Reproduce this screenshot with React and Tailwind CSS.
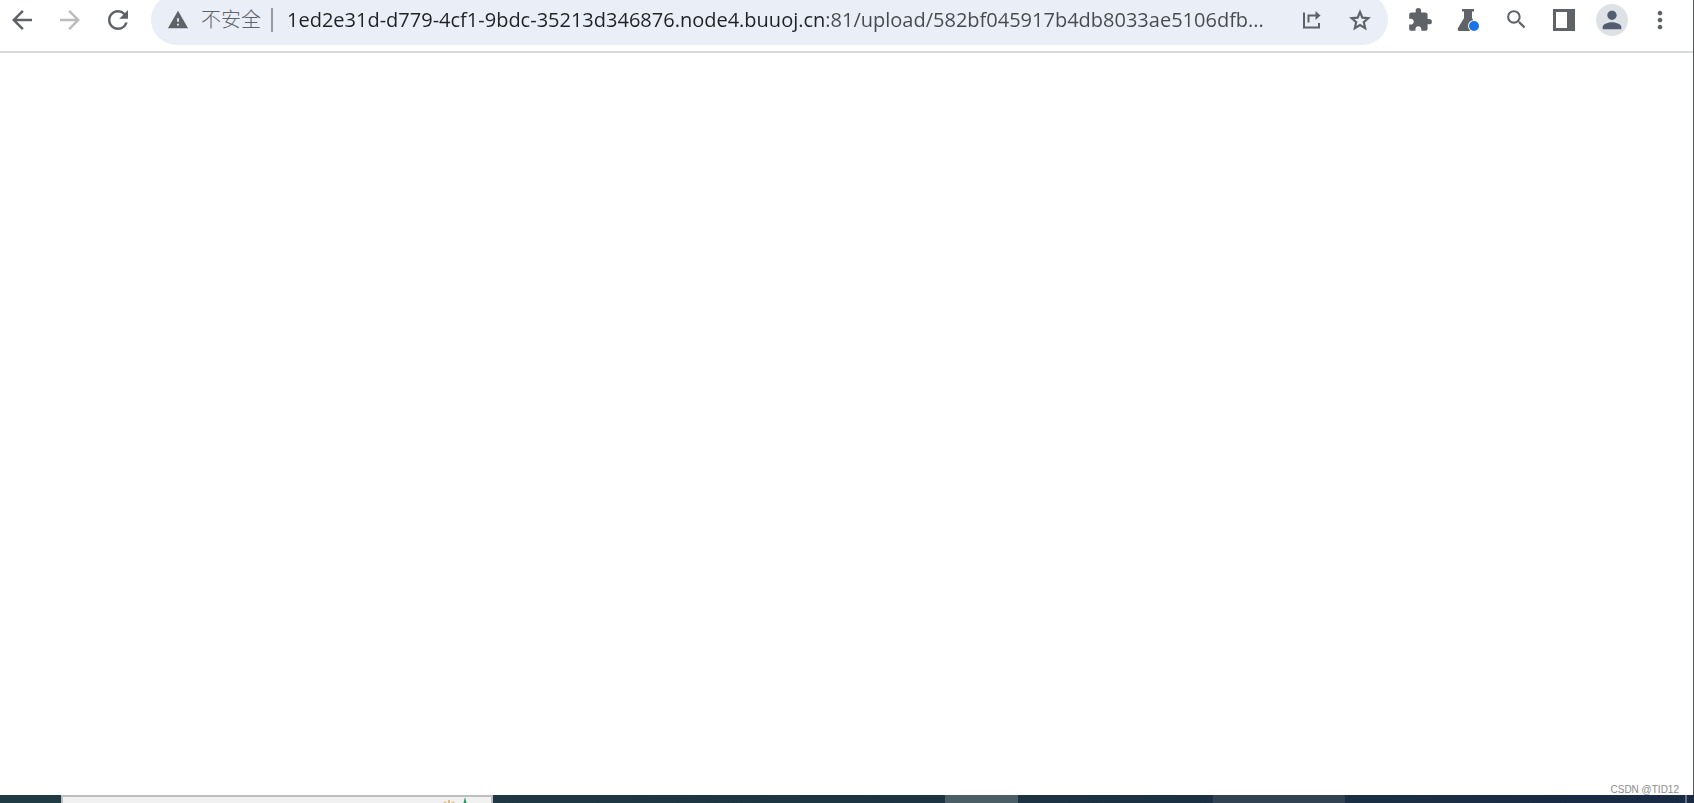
import { useState } from 'react';
import {
    MdArrowBack,
    MdArrowForward,
    MdExtension,
    MdMoreVert,
    MdPerson,
    MdRefresh,
    MdSearch,
    MdWarning,
} from 'react-icons/md';

function IconButton({ label, disabled, children }) {
    return (
        <button
            type="button"
            aria-label={label}
            disabled={disabled}
            className="flex h-8 w-8 shrink-0 items-center justify-center rounded-full text-[#5f6368] disabled:text-[#babcbe]"
        >
            {children}
        </button>
    );
}

function ShareIcon() {
    return (
        <svg width="20" height="20" viewBox="0 0 20 20" fill="none" stroke="currentColor" strokeWidth="2">
            <path d="M2 2.5V17.500h15v-4.500" />
            <path d="M6.500 12.500V5.500H15" />
            <path d="M13.500 1L18.500 5.500l-5 4.500z" fill="currentColor" stroke="none" />
        </svg>
    );
}

function StarIcon() {
    return (
        <svg width="26" height="26" viewBox="0 0 24 24" fill="none" stroke="currentColor" strokeWidth="2">
            <path d="M12 4.600l2.200 5.200 5.500.5-4.200 3.700 1.300 5.500L12 16.600l-4.800 2.900 1.300-5.500-4.200-3.700 5.500-.5z" />
        </svg>
    );
}

function FlaskIcon() {
    return (
        <svg width="24" height="24" viewBox="0 0 24 24">
            <path d="M6 1h12v2.500h-2v6.500l6 10c.8 1.500.3 3-1.500 3h-17c-1.800 0-2.300-1.500-1.500-3l6-10V3.500H6z" fill="#5f6368" />
            <circle cx="18" cy="18" r="6" fill="#fff" />
            <circle cx="18" cy="18" r="5" fill="#1a73e8" />
        </svg>
    );
}

function SidePanelIcon() {
    return (
        <svg width="22" height="22" viewBox="0 0 22 22">
            <path d="M0 0h22v22H0zM3 3v16h11V3z" fill="#5f6368" fillRule="evenodd" />
        </svg>
    );
}

function AddressBar() {
    const [url, setUrl] = useState('1ed2e31d-d779-4cf1-9bdc-35213d346876.node4.buuoj.cn:81/upload/582bf045917b4db8033ae5106dfb...');

    return (
        <div className="ml-px flex h-[51px] min-w-0 flex-1 items-center rounded-full bg-[#e9eef7] pl-4 pr-3">
            <button type="button" className="flex shrink-0 items-center gap-3 text-xl text-[#5f6368]">
                <MdWarning size={22} />
                <span className="font-light">不安全</span>
            </button>
            <div className="ml-2.5 mr-3.5 h-6 w-0.5 shrink-0 bg-[#9a9da3]" />
            {/* host is darker than the path */}
            <input
                type="text"
                aria-label="Address"
                value={url}
                onChange={(e) => setUrl(e.target.value)}
                className="h-8 min-w-0 flex-1 bg-[linear-gradient(to_right,#202124_540px,#47494d_540px)] bg-clip-text text-xl text-[#202124] outline-none [-webkit-text-fill-color:transparent]"
            />
            <div className="flex shrink-0 gap-4">
                <IconButton label="Share"><ShareIcon /></IconButton>
                <IconButton label="Bookmark"><StarIcon /></IconButton>
            </div>
        </div>
    );
}

function Toolbar() {
    return (
        <header className="border-b-2 border-[#dadada] pb-3">
            <div className="flex h-[39px] items-center gap-4 px-1.5">
                <IconButton label="Back"><MdArrowBack size={30} /></IconButton>
                <IconButton label="Forward" disabled><MdArrowForward size={30} /></IconButton>
                <IconButton label="Reload"><MdRefresh size={30} /></IconButton>
                <AddressBar />
                <div className="flex gap-4 pr-[11px]">
                    <IconButton label="Extensions"><MdExtension size={26} /></IconButton>
                    <IconButton label="Labs"><FlaskIcon /></IconButton>
                    <IconButton label="Search"><MdSearch size={25} /></IconButton>
                    <IconButton label="Side panel"><SidePanelIcon /></IconButton>
                    <button type="button" aria-label="Profile" className="flex h-8 w-8 items-center justify-center rounded-full bg-[#dee1e6] text-[#525e70]">
                        <MdPerson size={28} />
                    </button>
                    <IconButton label="Menu"><MdMoreVert size={28} /></IconButton>
                </div>
            </div>
        </header>
    );
}

function Taskbar() {
    return (
        <footer className="flex h-2 shrink-0 overflow-hidden bg-linear-to-r from-[#203b44] via-[#1d3541] to-[#192a45]">
            <div className="ml-[61px] flex h-10 w-[432px] shrink-0 justify-end gap-1.5 border-2 border-[#bebebe] bg-[#f1f1f1] pr-[22px]">
                <svg width="12" height="12" viewBox="0 0 12 12">
                    <path d="M6 3v6M1 5l3 2M11 5l-3 2" stroke="#dcc07c" strokeWidth="2" />
                </svg>
                <svg width="8" height="12" viewBox="0 0 8 12">
                    <path d="M4 0l2 8H2z" fill="#2a9463" />
                </svg>
            </div>
            <div className="ml-auto flex">
                <div className="mr-[195px] w-[73px] bg-[#4b5d65]" />
                <div className="mr-[340px] w-[132px] bg-[#324253]" />
                <div className="mr-[7px] w-0.5 bg-[#66717f]" />
            </div>
        </footer>
    );
}

export default function App() {
    return (
        <div className="flex h-screen flex-col overflow-hidden bg-white font-['Open_Sans','Noto_Sans_CJK_SC',sans-serif]">
            <div className="flex flex-1 flex-col border-r border-[#55585c]">
                <Toolbar />
                <main className="flex flex-1 items-end justify-end pr-3.5">
                    <p className="font-['Liberation_Sans',sans-serif] text-[10px] leading-[10px] text-[#8c8c8c]">CSDN @TID12</p>
                </main>
            </div>
            <Taskbar />
        </div>
    );
}
